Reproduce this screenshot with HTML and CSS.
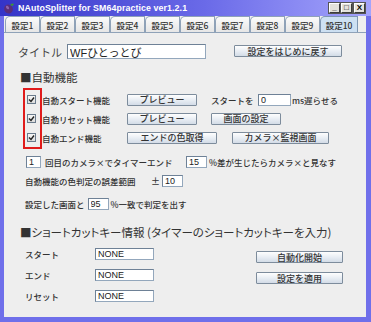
FILE: index.html
```html
<!DOCTYPE html>
<html lang="ja">
<head>
  <meta charset="UTF-8" />
  <title>NAutoSplitter for SM64practice ver1.2.1</title>
  <link rel="stylesheet" href="styles.css">
</head>
<body>
  <div class="window">
    <div class="titlebar">
      <svg class="app-icon" width="12" height="12" viewBox="0 0 12 12">
        <ellipse cx="5.5" cy="7" rx="4.2" ry="4.6" transform="rotate(-35 5.5 7)" fill="#5a2d7a"/>
        <ellipse cx="4.5" cy="5.5" rx="1.3" ry="2" transform="rotate(-35 4.5 5.5)" fill="#8d62ad"/>
        <path d="M7 3 L9 1.5 L11 2 L9.5 4 Z" fill="#3f9a2f"/>
      </svg>
      <span class="title">NAutoSplitter for SM64practice ver1.2.1</span>
      <div class="win-btns">
        <span class="wb">_</span>
        <span class="wb">□</span>
        <span class="wb close">X</span>
      </div>
    </div>

    <div class="frame">
      <div class="tabs">
        <div class="tab">設定1</div>
        <div class="tab">設定2</div>
        <div class="tab">設定3</div>
        <div class="tab">設定4</div>
        <div class="tab">設定5</div>
        <div class="tab">設定6</div>
        <div class="tab">設定7</div>
        <div class="tab">設定8</div>
        <div class="tab">設定9</div>
        <div class="tab active">設定10</div>
      </div>

      <div class="panel">
        <div class="top">
          <div>
            <div class="title-row">
              <span class="title-label">タイトル</span>
              <input class="field title-field" value="WFひとっとび">
            </div>
            <div class="heading">■自動機能</div>
          </div>
          <button class="btn reset-btn">設定をはじめに戻す</button>
        </div>

        <div class="auto">
          <div class="checks">
            <div class="check-cell"><span class="check"><svg width="7" height="7" viewBox="0 0 7 7"><path d="M1 3.5 L3 5.5 L6 1.5" stroke="#222" stroke-width="1.4" fill="none"/></svg></span></div>
            <div class="check-cell"><span class="check"><svg width="7" height="7" viewBox="0 0 7 7"><path d="M1 3.5 L3 5.5 L6 1.5" stroke="#222" stroke-width="1.4" fill="none"/></svg></span></div>
            <div class="check-cell"><span class="check"><svg width="7" height="7" viewBox="0 0 7 7"><path d="M1 3.5 L3 5.5 L6 1.5" stroke="#222" stroke-width="1.4" fill="none"/></svg></span></div>
          </div>
          <div class="auto-rows">
            <div class="auto-row">
              <span class="auto-label">自動スタート機能</span>
              <button class="btn preview-btn">プレビュー</button>
              <span class="start-label">スタートを</span>
              <input class="field delay-field" value="0">
              <span class="unit">ms遅らせる</span>
            </div>
            <div class="auto-row">
              <span class="auto-label">自動リセット機能</span>
              <button class="btn preview-btn">プレビュー</button>
              <button class="btn screen-btn">画面の設定</button>
            </div>
            <div class="auto-row">
              <span class="auto-label">自動エンド機能</span>
              <button class="btn color-btn">エンドの色取得</button>
              <button class="btn camera-btn">カメラ×監視画面</button>
            </div>
          </div>
        </div>

        <div class="line row-end">
          <input class="field small-field" value="1">
          <span class="end-label">回目のカメラ×でタイマーエンド</span>
          <input class="field num-field" value="15">
          <span class="after">%差が生じたらカメラ×と見なす</span>
        </div>
        <div class="line row-range">
          <span class="range-label">自動機能の色判定の誤差範囲</span>
          <span class="pm">±</span>
          <input class="field num-field" value="10">
        </div>
        <div class="line row-match">
          <span>設定した画面と</span>
          <input class="field num-field match-field" value="95">
          <span class="after">%一致で判定を出す</span>
        </div>

        <div class="heading heading-keys">■ショートカットキー情報 (タイマーのショートカットキーを入力)</div>

        <div class="keys">
          <div class="key-rows">
            <div class="key-row"><span class="key-label">スタート</span><input class="field key-field" value="NONE"></div>
            <div class="key-row"><span class="key-label">エンド</span><input class="field key-field" value="NONE"></div>
            <div class="key-row"><span class="key-label">リセット</span><input class="field key-field" value="NONE"></div>
          </div>
          <div class="key-btns">
            <button class="btn action-btn">自動化開始</button>
            <button class="btn action-btn">設定を適用</button>
          </div>
        </div>
      </div>
    </div>
  </div>
</body>
</html>
```

FILE: styles.css
```css
* {
  margin: 0;
  padding: 0;
  box-sizing: border-box;
}

body {
  background: #ffffff;
  font-family: "Noto Sans CJK JP", "Liberation Sans", sans-serif;
  color: #333333;
}

.window {
  width: 371px;
  height: 322px;
  display: flex;
  flex-direction: column;
  background: #6f6fea;
}

.titlebar {
  height: 16px;
  display: flex;
  align-items: center;
  padding-left: 3px;
  background: linear-gradient(90deg, #3434c8, #6a6ae8 55%, #a4a4fc);
}

.app-icon {
  flex: none;
}

.title {
  margin-left: 3px;
  font-family: "Liberation Sans", sans-serif;
  font-weight: bold;
  font-size: 8.8px;
  color: #ffffff;
  letter-spacing: 0.1px;
}

.win-btns {
  margin-left: auto;
  margin-right: 6px;
  display: flex;
  gap: 1px;
}

.wb {
  width: 11px;
  height: 10px;
  display: flex;
  align-items: center;
  justify-content: center;
  background: #e4e2dc;
  border: 1px solid #3c3c3c;
  border-top-color: #ffffff;
  border-left-color: #ffffff;
  outline: 1px solid #555;
  font-family: "Liberation Sans", sans-serif;
  font-weight: bold;
  font-size: 8px;
  line-height: 1;
  color: #000000;
}

.wb.close {
  margin-left: 1px;
}

.frame {
  flex: 1;
  display: flex;
  flex-direction: column;
  margin: 0 5px 5px 4px;
  background: #eeeeee;
}

.tabs {
  height: 17px;
  display: flex;
  align-items: flex-end;
  padding-left: 1px;
  border-bottom: 1px solid #8fa2b8;
  background: #eeeeee;
}

.tab {
  width: 35px;
  height: 16px;
  display: flex;
  align-items: center;
  justify-content: center;
  border: 1px solid #8fa2b8;
  border-bottom: none;
  border-top-left-radius: 5px;
  background: linear-gradient(#fbfbfb, #e6e6e6);
  font-size: 8.5px;
  font-weight: 500;
  color: #333333;
}

.tab.active {
  width: 38px;
  background: #cde0f2;
  border-color: #7f97b2;
}

.panel {
  flex: 1;
  padding-left: 14px;
  font-size: 8.5px;
  font-weight: 500;
}

.top {
  display: flex;
  justify-content: space-between;
}

.title-row {
  margin-top: 11px;
  height: 15px;
  display: flex;
  align-items: center;
}

.title-label {
  width: 49px;
  font-size: 11px;
  font-weight: 400;
  color: #444444;
}

.field {
  height: 12px;
  border: 1px solid #93a7bc;
  border-top-color: #6e8196;
  border-left-color: #6e8196;
  background: #ffffff;
  font-family: "Liberation Sans", "Noto Sans CJK JP", sans-serif;
  font-size: 9px;
  color: #222222;
  padding-left: 2px;
  outline: none;
}

.title-field {
  width: 139px;
  height: 15px;
  font-size: 11px;
}

.heading {
  margin-top: 11px;
  height: 14px;
  line-height: 14px;
  margin-left: 2px;
  font-size: 11.5px;
  font-weight: 400;
}

.btn {
  height: 12px;
  display: flex;
  align-items: center;
  justify-content: center;
  border: 1px solid #7d8c9c;
  border-radius: 1px;
  background: linear-gradient(#fefefe, #e9eef4 50%, #d3dce7);
  font-family: "Noto Sans CJK JP", sans-serif;
  font-size: 9px;
  font-weight: 500;
  color: #333333;
  line-height: 1;
}

.reset-btn {
  width: 108px;
  margin-top: 12px;
  margin-right: 24px;
}

.auto {
  display: flex;
  margin-top: 4px;
  margin-left: 5px;
}

.checks {
  width: 19px;
  border: 2px solid #e01b1b;
  display: flex;
  flex-direction: column;
}

.check-cell {
  height: 19px;
  display: flex;
  align-items: center;
  padding-left: 2px;
}

.check {
  width: 9px;
  height: 9px;
  display: flex;
  align-items: center;
  justify-content: center;
  border: 1px solid #6b7b8c;
  background: linear-gradient(#f6f6f6, #dcdcdc);
}

.auto-rows {
  padding-top: 2px;
}

.auto-row {
  height: 19px;
  display: flex;
  align-items: center;
}

.auto-label {
  width: 85px;
}

.preview-btn {
  width: 70px;
  margin-right: 14px;
}

.start-label {
  width: 47px;
}

.delay-field {
  width: 33px;
}

.unit {
  margin-left: 1px;
}

.screen-btn {
  width: 70px;
}

.color-btn {
  width: 90px;
  margin-right: 15px;
}

.camera-btn {
  width: 97px;
}

.line {
  height: 14px;
  display: flex;
  align-items: center;
}

.row-end {
  margin-top: 6px;
  margin-left: 8px;
}

.small-field {
  width: 15px;
}

.end-label {
  width: 145px;
  padding-left: 4px;
}

.num-field {
  width: 21px;
}

.after {
  margin-left: 2px;
}

.row-range {
  margin-top: 5px;
  margin-left: 7px;
}

.range-label {
  width: 126px;
}

.pm {
  width: 11px;
  font-size: 9px;
}

.row-match {
  margin-top: 9px;
  margin-left: 7px;
}

.match-field {
  margin-left: 3px;
}

.heading-keys {
  margin-top: 14px;
  font-feature-settings: "palt";
}

.keys {
  display: flex;
  justify-content: space-between;
  margin-top: 4px;
}

.key-rows {
  margin-left: 7px;
}

.key-row {
  height: 21px;
  display: flex;
  align-items: center;
}

.key-label {
  width: 70px;
}

.key-field {
  width: 59px;
}

.key-btns {
  display: flex;
  flex-direction: column;
  gap: 9px;
  margin-top: 8px;
  margin-right: 23px;
}

.action-btn {
  width: 87px;
}
```
